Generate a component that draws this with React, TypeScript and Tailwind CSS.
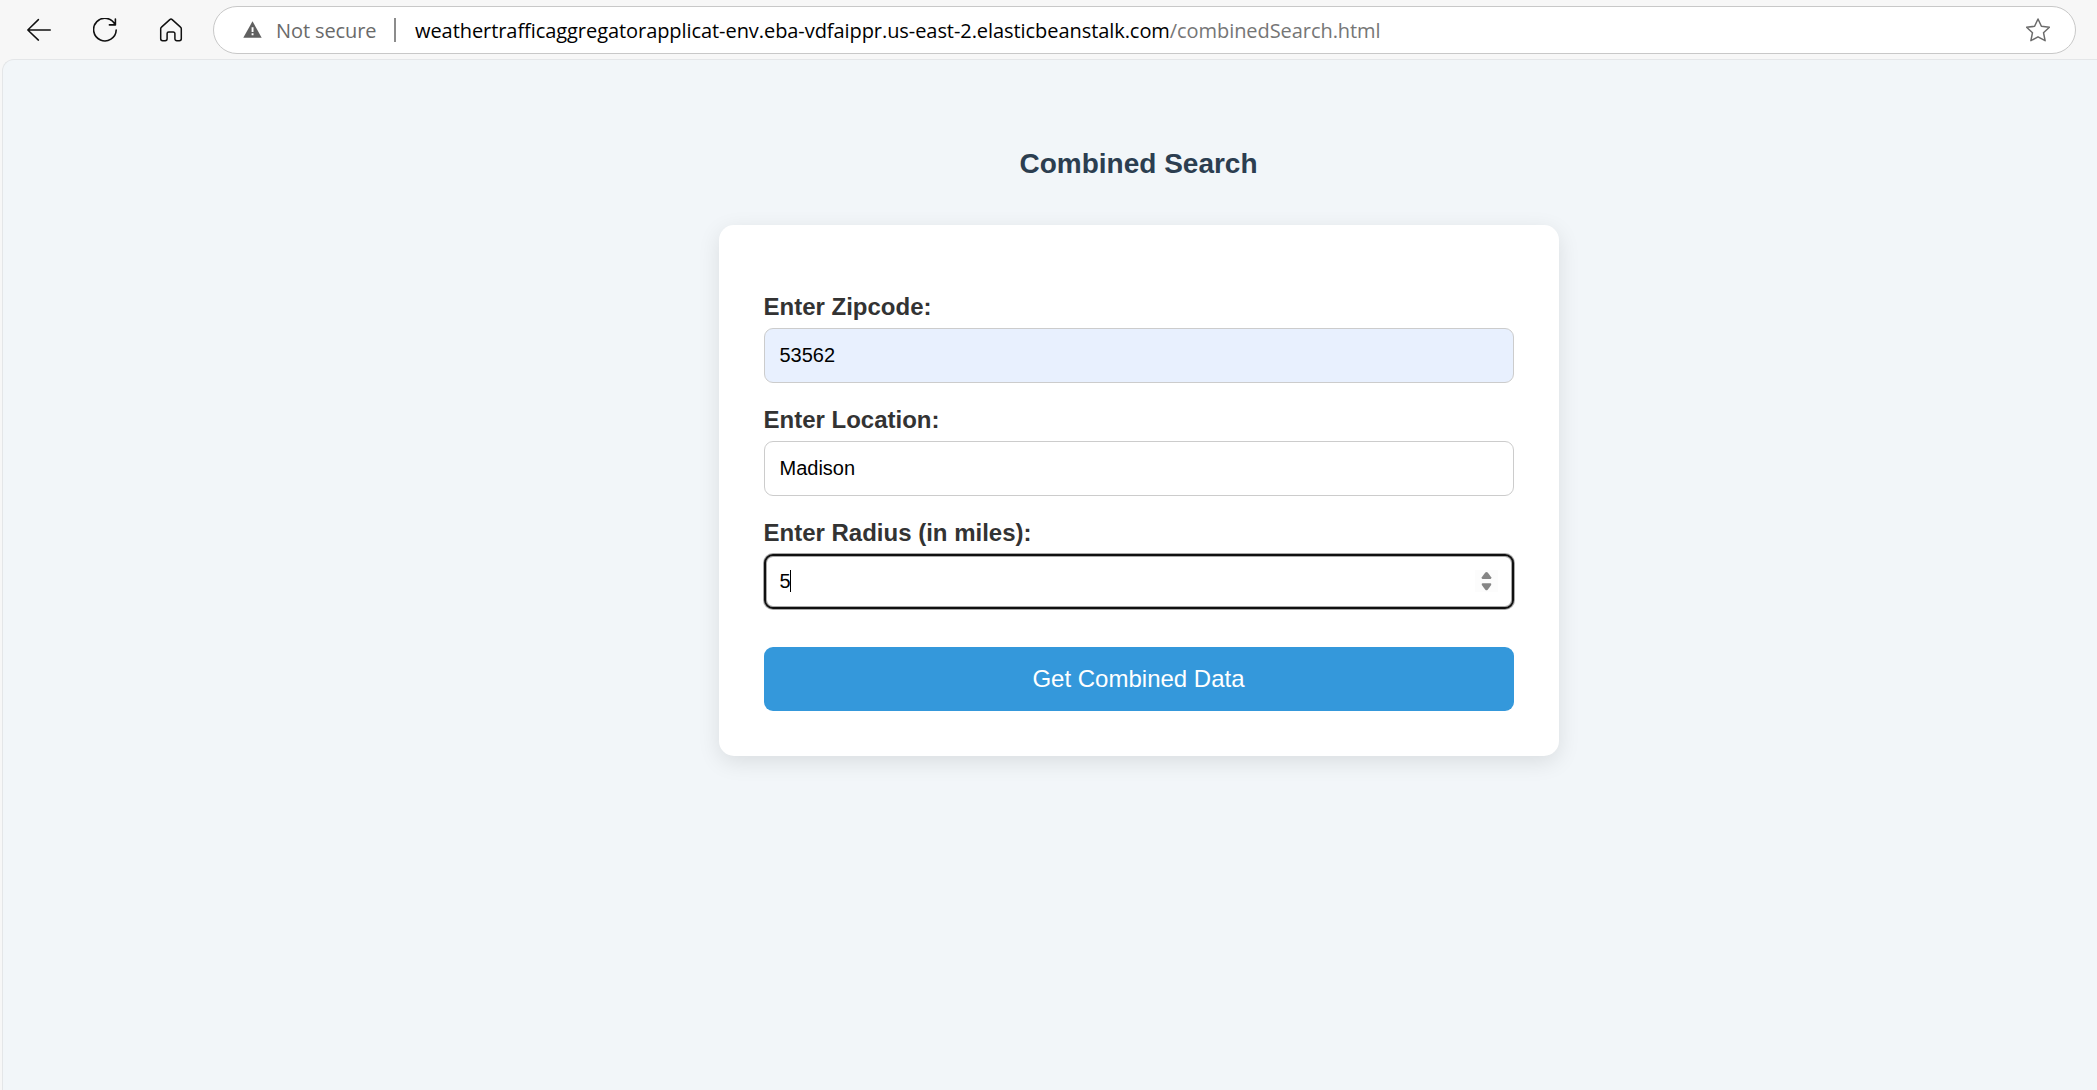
import React from 'react';

function BackIcon() {
  return (
    <svg className="h-6 w-6" viewBox="0 0 24 24" fill="none" stroke="#111" strokeWidth="1.5" strokeLinecap="round" strokeLinejoin="round">
      <path d="M23.3 12H.8M11.4 1.6L.8 12l10.6 10.1" />
    </svg>
  );
}

function ReloadIcon() {
  return (
    <svg className="h-6 w-6" viewBox="0 0 24 24" fill="none" stroke="#111" strokeWidth="1.6" strokeLinecap="round" strokeLinejoin="round">
      <path d="M22.2 6.9A11.3 11.3 0 1 0 23.2 12M22.4 1v5.900h-6" />
    </svg>
  );
}

function HomeIcon() {
  return (
    <svg className="h-6 w-6" viewBox="0 0 24 24" fill="none" stroke="#111" strokeWidth="1.5" strokeLinejoin="round">
      <path d="M10.8 1.6a1.8 1.8 0 0 1 2.4 0l8.3 7.5c.5.4.8 1 .8 1.7V20.8a1.9 1.9 0 0 1-1.9 1.9h-2.6a1.9 1.9 0 0 1-1.9-1.9v-5.2a1.6 1.6 0 0 0-1.6-1.6h-4.6a1.6 1.6 0 0 0-1.6 1.6v5.2a1.9 1.9 0 0 1-1.9 1.9H3.6a1.9 1.9 0 0 1-1.9-1.9V10.8c0-.7.3-1.3.8-1.7z" />
    </svg>
  );
}

function WarningIcon() {
  return (
    <svg className="h-[17px] w-[19px]" viewBox="0 0 19 17">
      <path d="M9.5 0.3L18.7 16.7H.3z" fill="#606060" />
      <path d="M8.6 6.2h1.9v4.8H8.6zM8.6 12.2h1.9v2H8.6z" fill="#fff" />
    </svg>
  );
}

function StarIcon() {
  return (
    <svg className="h-6 w-6" viewBox="0 0 24 24" fill="none" stroke="#6b6b6b" strokeWidth="1.5" strokeLinejoin="round">
      <path d="M12 1l3.4 7.3 8 1-5.9 5.4 1.6 8L12 18.8l-7.1 3.9 1.6-8L.6 9.3l8-1z" />
    </svg>
  );
}

function Toolbar() {
  return (
    <header className="flex h-[59px] shrink-0 items-center bg-[#f7f7f7] pl-[27px] pr-[21px]">
      <BackIcon />
      <div className="ml-[42px]"><ReloadIcon /></div>
      <div className="ml-[42px]"><HomeIcon /></div>
      <div className="ml-[30px] flex h-12 flex-1 items-center rounded-full border border-[#c8c8c8] bg-white pl-[29px] pr-[25px] font-['Open_Sans','Noto_Sans',sans-serif] text-[20px] leading-7 whitespace-nowrap">
        <WarningIcon />
        <span className="ml-[14px] w-[118px] pt-0.5 tracking-[-0.1px] text-[#6a6a6a]">Not secure</span>
        <span className="h-6 w-[2px] bg-[#8c8c8c]" />
        <span className="ml-[19px] flex-1 pt-0.5 tracking-[-0.065px] text-black">
          weathertrafficaggregatorapplicat-env.eba-vdfaippr.us-east-2.elasticbeanstalk.com
          <span className="text-[#767676]">/combinedSearch.html</span>
        </span>
        <StarIcon />
      </div>
    </header>
  );
}

function Spinner() {
  return (
    <svg className="h-[22px] w-[23px] bg-[#fcfcfc]" viewBox="0 0 23 22" fill="#858585">
      <path d="M10.3 2.5q1.2-1 2.4 0l3.5 4.7q.4 1.8-.7 1.8h-8q-1.1 0-.7-1.8z" />
      <path d="M10.3 19.7q1.2 1 2.4 0l3.5-4.7q.4-1.8-.7-1.8h-8q-1.1 0-.7 1.8z" />
    </svg>
  );
}

function Label({ children }: { children: React.ReactNode }) {
  return <div className="-ml-[0.5px] h-[36px] text-[24px] leading-[30px] font-bold text-[#333]">{children}</div>;
}

export default function App() {
  return (
    <div className="flex h-[1090px] w-full flex-col overflow-hidden bg-[#f7f7f7] font-['Liberation_Sans',Arial,sans-serif]">
      <Toolbar />
      <main className="ml-[2px] flex-1 rounded-tl-xl border-t border-l border-[#e4e6e8] bg-[#f2f6f9] pl-[716px]">
        <div className="w-[840px]">
          <h1 className="pt-[88px] pr-px text-center text-[28px] leading-8 font-bold text-[#2c3e50]">Combined Search</h1>
          <form className="mt-[45px] flex h-[531px] flex-col rounded-[15px] bg-white px-[45px] pt-[67px] shadow-[0_6px_22px_rgba(0,0,0,0.1)]">
            <Label>Enter Zipcode:</Label>
            <div className="flex h-[55px] items-center rounded-[9px] border border-[#ccc] bg-[#e8f0fe] px-[14.5px] pb-0.5 text-[20px] text-black">53562</div>
            <div className="mt-[22px]"><Label>Enter Location:</Label></div>
            <div className="flex h-[55px] items-center rounded-[9px] border border-[#ccc] bg-white px-[14.5px] pb-0.5 text-[20px] text-black">Madison</div>
            <div className="mt-[22px]"><Label>Enter Radius (in miles):</Label></div>
            <div className="flex h-[55px] items-center rounded-[9px] border-2 border-[#101010] bg-white pr-[14px] pl-[13.5px] pb-0.5 text-[20px] text-black shadow-[0_0_0_1px_#a8a8a8,inset_0_0_0_1px_#a8a8a8]">
              <span>5</span>
              <span className="-ml-[0.5px] h-[22px] w-px bg-black" />
              <span className="ml-auto"><Spinner /></span>
            </div>
            <div className="mt-[38px] flex h-16 items-center justify-center rounded-[9px] bg-[#3498db] pr-px text-[24px] text-white">Get Combined Data</div>
          </form>
        </div>
      </main>
    </div>
  );
}
